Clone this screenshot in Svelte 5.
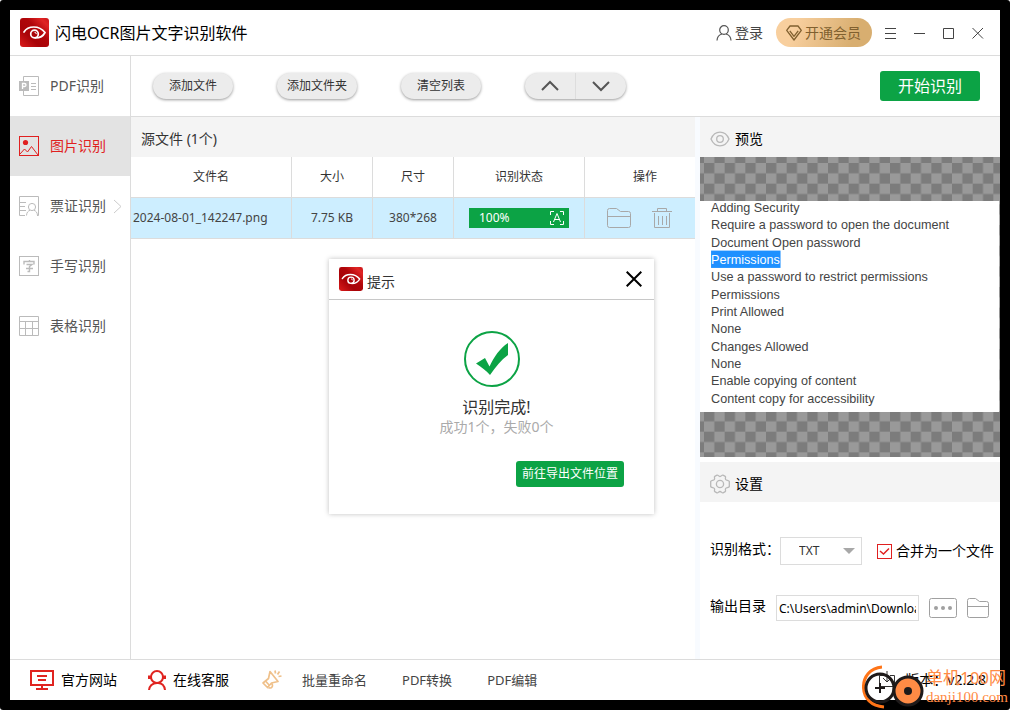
<script>
  const nav = [
    { id: 'pdf', label: 'PDF识别' },
    { id: 'image', label: '图片识别' },
    { id: 'ticket', label: '票证识别', more: true },
    { id: 'hand', label: '手写识别' },
    { id: 'table', label: '表格识别' }
  ];
  let active = $state('image');
  let dialogOpen = $state(true);
  let format = $state('TXT');
  let merge = $state(true);
  let outputPath = $state('C:\\Users\\admin\\Downloads');

  const tools = ['添加文件', '添加文件夹', '清空列表'];
  const columns = ['文件名', '大小', '尺寸', '识别状态', '操作'];
  const files = [{ name: '2024-08-01_142247.png', size: '7.75 KB', dim: '380*268', progress: 100 }];
  const lines = [
    'Adding Security',
    'Require a password to open the document',
    'Document Open password',
    'Permissions',
    'Use a password to restrict permissions',
    'Permissions',
    'Print Allowed',
    'None',
    'Changes Allowed',
    'None',
    'Enable copying of content',
    'Content copy for accessibility'
  ];
</script>

{#snippet logo(size)}
  <svg class="logo" width={size} height={size} viewBox="0 0 29 29" aria-hidden="true">
    <defs>
      <linearGradient id="logo{size}" x1="0" y1="1" x2="1" y2="0">
        <stop offset="0" stop-color="#dc1c1c" />
        <stop offset="0.35" stop-color="#a80308" />
        <stop offset="0.6" stop-color="#b0060a" />
        <stop offset="0.85" stop-color="#e02424" />
        <stop offset="1" stop-color="#c81418" />
      </linearGradient>
    </defs>
    <rect width="29" height="29" rx="3" fill="url(#logo{size})" />
    <path d="M4 14C8 7.500 19 7 25 14.500C23 18.500 19.500 20 15.500 20" fill="none" stroke="#fff" stroke-width="1.700" stroke-linecap="round" />
    <circle cx="14.500" cy="16" r="3.800" fill="none" stroke="#fff" stroke-width="1.700" />
    <path d="M14.500 14.300a1.800 1.800 0 0 1 1.800 1.800" fill="none" stroke="#fff" />
  </svg>
{/snippet}

{#snippet folder()}
  <svg width="24" height="20" viewBox="0 0 24 20" fill="none" stroke="#a8a8a8" aria-hidden="true">
    <path d="M.5 2.5Q.5.5 2.5.5H9.5L13.5 3.5H21.5Q23.500 3.500 23.500 5.500V17.500Q23.500 19.500 21.500 19.500H2.500Q.5 19.500 .5 17.500ZM.5 8.500H23.500" />
  </svg>
{/snippet}

<div class="frame">
  <div class="window">
    <header class="titlebar">
      {@render logo(29)}
      <h1>闪电OCR图片文字识别软件</h1>
      <button class="login">
        <svg width="16" height="16" viewBox="0 0 16 16" fill="none" stroke="#555" stroke-width="1.200" aria-hidden="true">
          <circle cx="8" cy="5" r="4.300" />
          <path d="M1 15.500C1.200 11.800 3.500 9.700 6 9M15 15.500C14.800 11.800 12.500 9.700 10 9" />
        </svg>
        登录
      </button>
      <button class="vip">
        <svg width="16" height="16" viewBox="0 0 16 16" fill="none" stroke="#80602f" stroke-width="1.300" stroke-linejoin="round" aria-hidden="true">
          <path d="M4 1H12L15.300 5.300L8 15L.7 5.300Z" />
          <path d="M3.800 5.800L8 11.300L12.200 5.800" />
        </svg>
        开通会员
      </button>
      <nav class="controls" aria-label="窗口">
        <button aria-label="菜单"><svg width="12" height="12" viewBox="0 0 12 12"><path d="M0 1.500H11M0 6.500H11M0 11.500H11" /></svg></button>
        <button aria-label="最小化"><svg width="12" height="12" viewBox="0 0 12 12"><path d="M0 6.500H11" /></svg></button>
        <button aria-label="最大化"><svg width="12" height="12" viewBox="0 0 12 12"><path d="M.5 1.500H10.500V11.500H.5Z" /></svg></button>
        <button aria-label="关闭"><svg width="12" height="12" viewBox="0 0 12 12"><path d="M.5 1L11 11.500M11 1L.5 11.500" /></svg></button>
      </nav>
    </header>

    <div class="body">
      <nav class="sidebar" aria-label="功能">
        {#each nav as item (item.id)}
          <button class="item" class:active={active === item.id} onclick={() => (active = item.id)}>
            <svg width="20" height="20" viewBox="0 0 20 20" fill="none" stroke="currentColor" aria-hidden="true">
              {#if item.id === 'pdf'}
                <path d="M4.500 5V.5H19.500V19.500H4.500V15M12 7.500H17M12 10.500H17M12 13.500H17" />
                <path d="M0 5H10V15H0Z" fill="currentColor" stroke="none" />
                <path d="M3.500 13V7.500H5.500A1.500 1.500 0 0 1 5.500 10.500H3.500" stroke="#fff" stroke-width="1.300" />
              {:else if item.id === 'image'}
                <rect x=".5" y=".5" width="19" height="19" />
                <circle cx="6.500" cy="6.500" r="2.600" fill="currentColor" stroke="none" />
                <path d="M1 18L5.500 13L8.500 16L12.500 10.500L19 19" />
              {:else if item.id === 'ticket'}
                <path d="M6 19.500H.5V.5H19.500V19.500H18M.5 6.500H7M.5 10.500H6M.5 14.500H7" />
                <circle cx="13" cy="11" r="3.600" />
                <path d="M7.500 19.500C7.700 16.500 9 15 11 14.300M18.500 19.500C18.300 16.500 17 15 15 14.300" />
              {:else if item.id === 'hand'}
                <rect x=".5" y=".5" width="19" height="19" />
                <path d="M5 8.500V5.500H15V8.500M10.500 4V5.500M7.500 8.500H13L10.500 10.500V15.500H8.500M7 12.500H14" stroke-width="1.400" />
              {:else}
                <path d="M.5 .5H19.500V19.500H.5ZM.5 5.500H19.500M.5 12.500H19.500M6.500 5.500V19.500M13.500 5.500V19.500" />
              {/if}
            </svg>
            <span>{item.label}</span>
            {#if item.more}
              <svg class="more" width="9" height="15" viewBox="0 0 9 15" fill="none" stroke="#ccc" aria-hidden="true"><path d="M1 1L8 7.500L1 14" /></svg>
            {/if}
          </button>
        {/each}
      </nav>

      <div class="work">
        <div class="toolbar">
          {#each tools as tool}
            <button class="pill">{tool}</button>
          {/each}
          <div class="pill move">
            <button aria-label="上移"><svg width="18" height="12" viewBox="0 0 18 12"><path d="M1 10L9 2L17 10" /></svg></button>
            <button aria-label="下移"><svg width="18" height="12" viewBox="0 0 18 12"><path d="M1 2L9 10L17 2" /></svg></button>
          </div>
          <button class="start">开始识别</button>
        </div>

        <div class="panes">
          <main class="files">
            <h2 class="section">源文件 ({files.length}个)</h2>
            <table>
              <colgroup><col /><col class="c-small" /><col class="c-small" /><col class="c-state" /><col class="c-action" /></colgroup>
              <thead>
                <tr>{#each columns as c}<th scope="col">{c}</th>{/each}</tr>
              </thead>
              <tbody>
                {#each files as f (f.name)}
                  <tr>
                    <td class="name">{f.name}</td>
                    <td>{f.size}</td>
                    <td>{f.dim}</td>
                    <td>
                      <div class="progress">
                        <span>{f.progress}%</span>
                        <svg width="14" height="14" viewBox="0 0 14 14" fill="none" stroke="#fff" aria-hidden="true">
                          <path d="M.5 4V.5H4M10 .5H13.500V4M13.500 10V13.500H10M4 13.500H.5V10M3.500 11L7 2.500L10.500 11M5 8.500H9" />
                        </svg>
                      </div>
                    </td>
                    <td>
                      <div class="actions">
                        <button aria-label="打开文件夹">{@render folder()}</button>
                        <button aria-label="删除">
                          <svg width="20" height="20" viewBox="0 0 20 20" fill="none" stroke="#a8a8a8" aria-hidden="true">
                            <path d="M0 3.500H20M5.500 3.500V.5H14.500V3.500M2.500 5V19.500H17.500V5M6.500 8V17M10.500 8V17M14.500 8V17" />
                          </svg>
                        </button>
                      </div>
                    </td>
                  </tr>
                {/each}
              </tbody>
            </table>
          </main>

          <aside class="side">
            <h2 class="section">
              <svg width="20" height="16" viewBox="0 0 20 16" fill="none" stroke="#b8b8b8" stroke-width="1.300" aria-hidden="true">
                <path d="M1 8C3 3.300 6.200 1.200 10 1.200S17 3.300 19 8C17 12.700 13.800 14.800 10 14.800S3 12.700 1 8Z" />
                <circle cx="10" cy="8" r="3.300" />
              </svg>
              预览
            </h2>
            <svg class="preview" viewBox="0 0 300 300" role="img" aria-label="2024-08-01_142247.png">
              <defs>
                <pattern id="checker" x="4" y="6" width="20.667" height="20.667" patternUnits="userSpaceOnUse">
                  <rect width="20.667" height="20.667" fill="#999" />
                  <path d="M0 0H10.333V20.667H20.667V10.333H0Z" fill="#7c7c7c" />
                </pattern>
              </defs>
              <rect width="300" height="300" fill="url(#checker)" />
              <svg x="0" y="44" width="300" height="211" viewBox="0 0 380 268" preserveAspectRatio="none">
                <rect width="379" height="268" fill="#fff" />
                <rect x="14" y="63" width="88" height="22" fill="#1e90ff" />
                {#each lines as line, i}
                  <text x="14" y={14 + i * 22} class:selected={i === 3}>{line}</text>
                {/each}
              </svg>
            </svg>

            <h2 class="section">
              <svg width="20" height="20" viewBox="0 0 20 20" fill="none" stroke="#b8b8b8" stroke-width="1.300" stroke-linejoin="round" aria-hidden="true">
                <path d="M7 1.200C8 .5 8.500 2.500 10 2.500S12 .5 13 1.200L15.200 2.300C16.300 3 14.800 4.300 15.600 5.500S19 6 19.300 7.500V12.500C19 14 16.400 13.300 15.600 14.500S16.300 17 15.200 17.700L13 18.800C12 19.500 11.500 17.500 10 17.500S8 19.500 7 18.800L4.800 17.700C3.700 17 5.200 15.700 4.400 14.500S1 14 .7 12.500V7.500C1 6 3.600 6.700 4.400 5.500S3.700 3 4.800 2.300Z" />
                <circle cx="10" cy="10" r="3.600" />
              </svg>
              设置
            </h2>
            <form class="settings" onsubmit={(e) => e.preventDefault()}>
              <div class="row">
                <label class="caption" for="format">识别格式：</label>
                <div class="select">
                  <select id="format" bind:value={format}>
                    <option>TXT</option>
                    <option>DOCX</option>
                  </select>
                  <svg width="12" height="6" viewBox="0 0 12 6" aria-hidden="true"><path d="M0 0H12L6 6Z" fill="#a8a8a8" /></svg>
                </div>
                <label class="check"><input type="checkbox" bind:checked={merge} />合并为一个文件</label>
              </div>
              <div class="row output">
                <label class="caption" for="output">输出目录</label>
                <input id="output" type="text" bind:value={outputPath} />
                <button type="button" aria-label="浏览">
                  <svg width="28" height="20" viewBox="0 0 28 20" aria-hidden="true">
                    <rect x=".5" y=".5" width="27" height="19" rx="2" fill="none" stroke="#a0a0a0" />
                    <g fill="#a0a0a0"><circle cx="7" cy="10" r="2" /><circle cx="14" cy="10" r="2" /><circle cx="21" cy="10" r="2" /></g>
                  </svg>
                </button>
                <button type="button" aria-label="打开目录">
                  <svg width="22" height="20" viewBox="0 0 22 20" fill="none" stroke="#a0a0a0" aria-hidden="true">
                    <path d="M.5 2.500Q.5 .5 2.500 .5H8.500L12.500 3.500H19.500Q21.500 3.500 21.500 5.500V17.500Q21.500 19.500 19.500 19.500H2.500Q.5 19.500 .5 17.500ZM.5 8.500H21.500" />
                  </svg>
                </button>
              </div>
            </form>
          </aside>
        </div>
      </div>
    </div>

    <footer>
      <a class="site" href="#site">
        <svg width="24" height="20" viewBox="0 0 24 20" fill="none" stroke="#e02420" stroke-width="2" aria-hidden="true">
          <path d="M1 1H23V15H1ZM7 6H17M8 10H16M12 15V18M6 19H18" />
        </svg>
        官方网站
      </a>
      <a class="service" href="#service">
        <svg width="18" height="20" viewBox="0 0 18 20" fill="none" stroke="#e02420" stroke-width="2" aria-hidden="true">
          <circle cx="9" cy="7" r="6" />
          <path d="M1 20C1.500 16 4 13.500 9 13S16.500 16 17 20" />
          <path d="M1.500 5.500V9M16.500 5.500V9" stroke-width="3" />
        </svg>
        在线客服
      </a>
      <svg class="horn" width="20" height="20" viewBox="0 0 20 20" fill="none" stroke="#efc08a" stroke-width="1.700" stroke-linejoin="round" aria-hidden="true">
        <path d="M8 1.500L16 11.500L9.500 13L5.500 17.500L1 13L6.500 8.500Z" />
        <path d="M3.500 11L7.500 15.500M9.500 13.500A2.500 2.500 0 1 1 6.500 17.500M13 .5L13.500 3.500M17.500 1.500L15.500 4.500M19.500 6L16.500 6.500" />
      </svg>
      <a class="link" href="#rename">批量重命名</a>
      <a class="link" href="#convert">PDF转换</a>
      <a class="link" href="#edit">PDF编辑</a>
      <span class="version">
        <svg width="16" height="18" viewBox="0 0 16 18" fill="none" stroke="#333" aria-hidden="true">
          <path d="M5 4.500H.5V15.500H15.500V4.500H11M8 0V11M4 7L8 11L12 7" />
        </svg>
        版本：v2.2.8
      </span>
    </footer>

    {#if dialogOpen}
      <div class="dialog" role="dialog" aria-labelledby="dialog-title">
        <div class="dialog-head">
          {@render logo(24)}
          <h2 id="dialog-title">提示</h2>
          <button aria-label="关闭提示" onclick={() => (dialogOpen = false)}>
            <svg width="16" height="16" viewBox="0 0 16 16" stroke="#000" stroke-width="2" aria-hidden="true"><path d="M.7 .7L15.300 15.300M15.300 .7L.7 15.300" /></svg>
          </button>
        </div>
        <div class="dialog-body">
          <svg width="56" height="56" viewBox="0 0 56 56" aria-hidden="true">
            <circle cx="28" cy="28" r="27" fill="none" stroke="#0ca345" stroke-width="2" />
            <path d="M12 32.500L21 27L25.500 35.500C30 26 36 17 44 12V24C37 29 32 35.500 26 44C22 39.500 17.500 36 12 32.500Z" fill="#0ca345" />
          </svg>
          <p class="done">识别完成!</p>
          <p class="count">成功1个，失败0个</p>
          <button>前往导出文件位置</button>
        </div>
      </div>
    {/if}
  </div>

  <div class="stamp">
    <svg width="64" height="46" viewBox="0 0 64 46" fill="none" aria-hidden="true">
      <path d="M20 3C8 4 1 13 1.500 24C2 34 9 42 22 43" stroke="#ff7417" stroke-width="3" />
      <circle cx="18" cy="24" r="14" stroke="#1e1a1a" stroke-width="3" />
      <path d="M18 19V29M13 24H23" stroke="#1e1a1a" stroke-width="2" />
      <circle cx="46" cy="27" r="14" fill="#ff8b45" stroke="#1e1a1a" stroke-width="3" />
      <circle cx="46" cy="27" r="4" fill="#1e1a1a" />
    </svg>
    <div><strong>单机100网</strong><span>danji100.com</span></div>
  </div>
</div>

<style>
  :global(body) { margin: 0; background: #fff; }
  * { box-sizing: border-box; }
  h1, h2, p { margin: 0; font-weight: 400; }
  button { padding: 0; border: 0; background: none; color: inherit; font: inherit; cursor: pointer; }
  a { color: inherit; text-decoration: none; }
  svg { display: block; flex: none; }

  .frame {
    position: relative;
    display: flex;
    min-height: 100vh;
    padding: 10px;
    border-radius: 3px;
    background: #000;
    color: #000;
    font: 14px/20px "Noto Sans", "Noto Sans CJK SC", sans-serif;
  }
  .window { position: relative; flex: 1; min-width: 0; display: flex; flex-direction: column; background: #fff; }

  .titlebar { display: flex; align-items: center; height: 46px; padding: 0 16px 0 10px; border-bottom: 1px solid #dcdcdc; }
  h1 { margin: 0 auto 0 6px; font-size: 16px; }
  .login { display: flex; align-items: center; gap: 3px; margin-right: 13px; color: #444; }
  .vip {
    display: flex; align-items: center; gap: 3px; height: 29px; padding: 0 11px 0 10px; margin-right: 13px;
    border-radius: 15px; background: linear-gradient(110deg, #f8cf9e 20%, #d8ae70 80%); color: #80602f;
  }
  .controls { display: flex; gap: 17px; }
  .controls svg { fill: none; stroke: #444; }

  .body { flex: 1; display: flex; }
  .sidebar { width: 121px; flex: none; border-right: 1px solid #dcdcdc; }
  .item { display: flex; align-items: center; gap: 11px; width: 100%; height: 60px; padding: 0 8px 0 9px; color: #bbb; text-align: left; white-space: nowrap; }
  .item span { color: #555; }
  .item.active { background: #e3e3e3; color: #e02020; }
  .item.active span { color: inherit; }
  .item .more { margin-left: -4px; }

  .work { flex: 1; min-width: 0; display: flex; flex-direction: column; }
  .toolbar { display: flex; align-items: center; gap: 44px; height: 61px; padding: 0 20px 0 22px; border-bottom: 1px solid #dcdcdc; }
  .pill { width: 80px; height: 26px; border-radius: 13px; background: #ececec; box-shadow: 0 1px 3px rgba(0, 0, 0, .4); color: #333; font-size: 12px; }
  .move { display: flex; width: 101px; }
  .move button { flex: 1; display: grid; place-items: center; }
  .move button + button { border-left: 1px solid #ddd; }
  .move svg { fill: none; stroke: #555; stroke-width: 2; }
  .start { width: 100px; height: 30px; margin-left: auto; border-radius: 3px; background: #0ca345; color: #fff; font-size: 16px; }

  .panes { flex: 1; display: flex; }
  .section { display: flex; align-items: center; gap: 5px; height: 40px; padding: 3px 10px 0; background: #f4f4f4; font-size: 14px; }
  .files { flex: 1; min-width: 0; border-right: 5px solid #f8fbff; }
  .files .section { color: #333; }
  table { width: 100%; table-layout: fixed; border-collapse: separate; border-spacing: 0; font-size: 12px; color: #333; }
  .c-small { width: 81px; }
  .c-state { width: 131px; }
  .c-action { width: 110px; }
  th, td { height: 41px; padding: 0; border-right: 1px solid #dcdcdc; border-bottom: 1px solid #dcdcdc; font-weight: 400; text-align: center; }
  th:last-child, td:last-child { border-right: 0; }
  th:last-child { padding-left: 10px; }
  tbody tr { background: #cdeeff; color: #444; }
  .name { padding-left: 2px; text-align: left; }
  .progress { display: flex; align-items: center; justify-content: space-between; height: 20px; margin: 0 15px; padding: 0 5px 0 10px; background: #0ca345; color: #fff; }
  .actions { display: flex; align-items: center; justify-content: center; gap: 21px; padding-right: 2px; }

  .side { width: 300px; flex: none; display: flex; flex-direction: column; }
  .preview { width: 100%; margin-bottom: 5px; }
  .preview text { font: 16px "Liberation Sans", Arial, sans-serif; fill: #444; }
  .preview .selected { fill: #fff; }
  .settings { display: flex; flex-direction: column; gap: 30px; padding: 35px 6px 35px 10px; }
  .row { display: flex; align-items: center; white-space: nowrap; }
  .caption { padding-bottom: 4px; }
  .select { position: relative; flex: 1; }
  select { width: 100%; height: 28px; padding: 0 18px; border: 1px solid #dcdcdc; border-radius: 0; appearance: none; background: #fff; color: #333; font: inherit; font-size: 12px; }
  .select svg { position: absolute; right: 7px; top: 11px; pointer-events: none; }
  .check { display: flex; align-items: center; gap: 4px; margin-left: 15px; }
  .check input {
    width: 15px; height: 15px; margin: 0; border: 1px solid #e02020; appearance: none;
    background: center no-repeat url("data:image/svg+xml,%3Csvg xmlns='http://www.w3.org/2000/svg' width='11' height='9' fill='none' stroke='%23e02020' stroke-width='1.500'%3E%3Cpath d='M1 4L4.500 7L10 1.500'/%3E%3C/svg%3E");
  }
  .check input:not(:checked) { background-image: none; }
  .output { gap: 10px; padding-right: 5px; }
  .output input { flex: 1; min-width: 0; height: 26px; padding: 0 2px; border: 1px solid #dcdcdc; font: inherit; font-size: 12px; }

  footer { display: flex; align-items: center; height: 41px; padding: 0 14px 0 20px; border-top: 1px solid #dcdcdc; }
  footer a, .version { display: flex; align-items: center; gap: 7px; }
  .service { margin-left: 31px; }
  .horn { margin: 0 20px 0 33px; }
  .link { margin-right: 35px; color: #444; font-size: 13px; }
  .version { gap: 10px; margin-left: auto; }

  .dialog { position: absolute; left: 319px; top: 249px; width: 325px; background: #fff; box-shadow: 0 0 5px rgba(0, 0, 0, .25); }
  .dialog-head { display: flex; align-items: center; height: 41px; padding: 0 12px 0 10px; border-bottom: 1px solid #c8c8c8; }
  .dialog-head h2 { margin: 6px auto 0 4px; font-size: 14px; color: #333; }
  .dialog-body { display: flex; flex-direction: column; align-items: center; padding: 31px 30px 27px; }
  .done { margin-top: 10px; padding-left: 10px; color: #333; font-size: 16px; }
  .count { padding-left: 10px; color: #aaa; }
  .dialog-body button { align-self: flex-end; width: 108px; height: 26px; margin-top: 24px; border-radius: 3px; background: #0ca345; color: #fff; font-size: 12px; }

  .stamp { position: absolute; right: 2px; bottom: 0; display: flex; align-items: center; color: #ff8b45; pointer-events: none; }
  .stamp strong { display: block; font-size: 17px; line-height: 20px; font-weight: 400; }
  .stamp span { display: block; font: 15px/18px "Liberation Serif", serif; }
</style>
